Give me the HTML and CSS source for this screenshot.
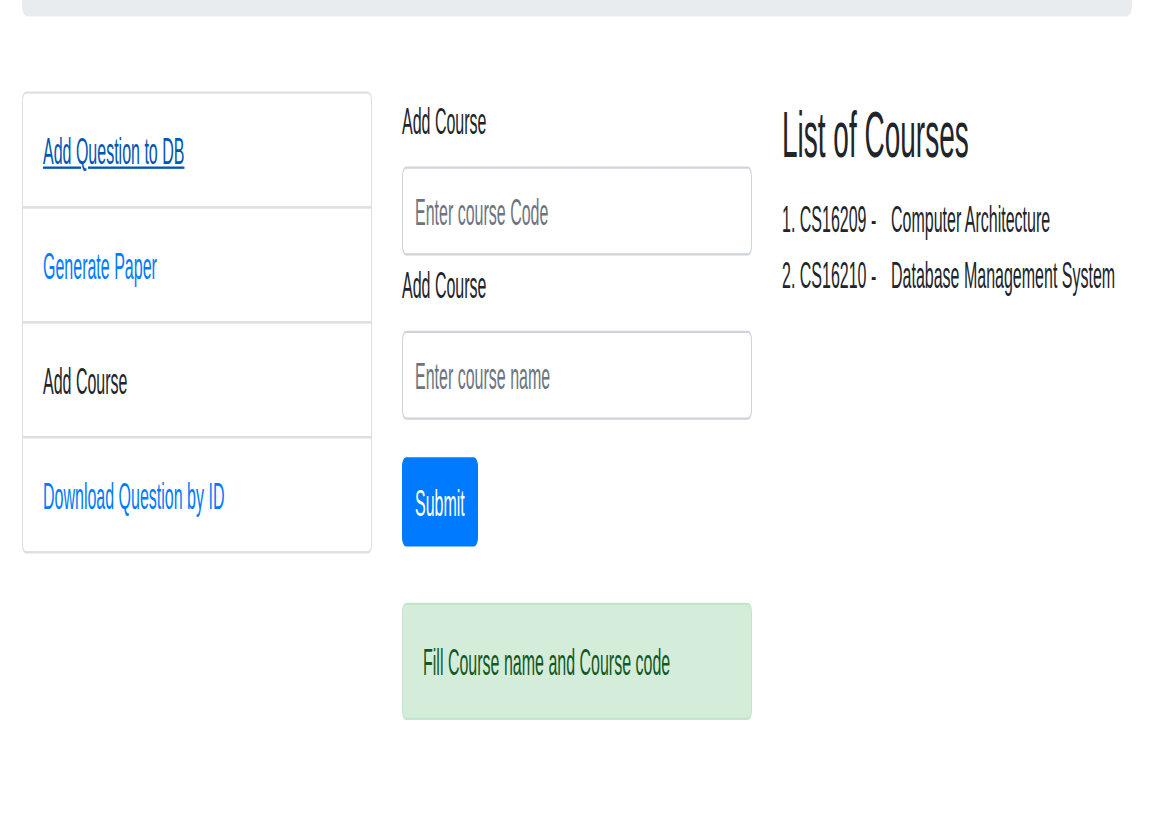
FILE: index.html
```html
<!DOCTYPE html>
<html lang="en">
<head>
<meta charset="utf-8">
<title>Add Course</title>
<link rel="stylesheet" href="styles.css">
</head>
<body>
<div class="page">
  <div class="container">
    <div class="jumbotron"></div>
    <div class="row">
      <div class="col">
        <div class="list-group">
          <a class="list-group-item link hovered" href="#">Add Question to DB</a>
          <a class="list-group-item link" href="#">Generate Paper</a>
          <div class="list-group-item">Add Course</div>
          <a class="list-group-item link" href="#">Download Question by ID</a>
        </div>
      </div>
      <div class="col">
        <form class="course-form">
          <label class="form-label" for="code">Add Course</label>
          <input class="form-control" id="code" type="text" placeholder="Enter course Code">
          <label class="form-label" for="name">Add Course</label>
          <input class="form-control" id="name" type="text" placeholder="Enter course name">
          <button class="btn-primary" type="button">Submit</button>
        </form>
        <div class="alert-success">Fill Course name and Course code</div>
      </div>
      <div class="col">
        <h3 class="title">List of Courses</h3>
        <ul class="course-list">
          <li class="course"><span class="code">1. CS16209 -</span><span class="name">Computer Architecture</span></li>
          <li class="course"><span class="code">2. CS16210 -</span><span class="name">Database Management System</span></li>
        </ul>
      </div>
    </div>
  </div>
</div>
</body>
</html>
```

FILE: styles.css
```css
html, body {
  margin: 0;
  padding: 0;
  background: #fff;
  height: 100%;
}
body {
  font-family: "Liberation Sans", Arial, sans-serif;
  font-size: 16px;
  line-height: 24px;
  color: #212529;
}
.page {
  transform: scaleY(2.345);
  transform-origin: 0 0;
}
.container {
  width: 1110px;
  margin-left: 22px;
}
.jumbotron {
  height: 6.6px;
  background: #e9ecef;
  border-radius: 0 0 4.8px 4.8px;
  margin-bottom: 32.2px;
}
.row {
  display: grid;
  grid-template-columns: 350px 350px 350px;
  column-gap: 30px;
}
.list-group {
  display: flex;
  flex-direction: column;
}
.list-group-item {
  display: block;
  padding: 13.3px 20px 10.7px;
  border: 1px solid rgba(0, 0, 0, 0.125);
  margin-bottom: -1px;
  color: #212529;
  background: #fff;
  text-decoration: none;
}
.list-group-item:first-child {
  border-top-left-radius: 4px;
  border-top-right-radius: 4px;
}
.list-group-item:last-child {
  border-bottom-left-radius: 4px;
  border-bottom-right-radius: 4px;
  margin-bottom: 0;
}
.link {
  color: #007bff;
}
.hovered {
  color: #0056b3;
  text-decoration: underline;
}
.course-form {
  display: flex;
  flex-direction: column;
  align-items: flex-start;
}
.form-label {
  display: block;
  padding-top: 1.4px;
  margin-bottom: 6.6px;
}
.form-control {
  box-sizing: border-box;
  width: 100%;
  height: 38px;
  padding: 7.3px 12px 4.7px;
  font-family: inherit;
  font-size: 16px;
  line-height: 24px;
  color: #495057;
  background: #fff;
  border: 1px solid #ced4da;
  border-radius: 4px;
  margin: 0;
}
.form-control::placeholder {
  color: #6c757d;
  opacity: 1;
}
.btn-primary {
  margin-top: 16px;
  height: 38px;
  padding: 7.3px 12px 4.7px;
  font-family: inherit;
  font-size: 16px;
  line-height: 24px;
  color: #fff;
  background: #007bff;
  border: 1px solid #007bff;
  border-radius: 4px;
}
.alert-success {
  margin-top: 24px;
  padding: 13.3px 20px 10.7px;
  color: #155724;
  background: #d4edda;
  border: 1px solid #c3e6cb;
  border-radius: 4px;
}
.title {
  margin: 0 0 6px;
  padding-top: 2px;
  font-size: 28px;
  line-height: 33.6px;
  font-weight: 500;
}
.course-list {
  list-style: none;
  margin: 0;
  padding: 1.6px 0 0;
}
.course {
  display: grid;
  grid-template-columns: 109px auto;
}
```
